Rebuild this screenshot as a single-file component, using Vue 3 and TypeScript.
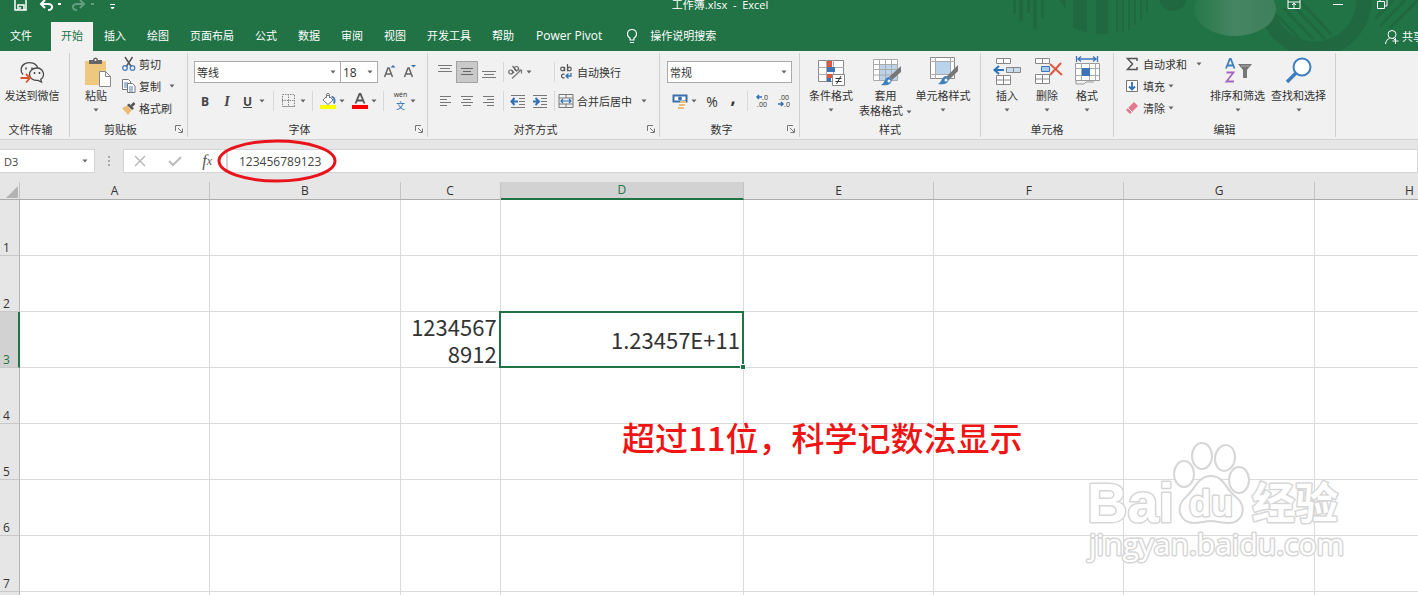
<script setup lang="ts">
import { ref } from 'vue'

const tabs = ['文件', '开始', '插入', '绘图', '页面布局', '公式', '数据', '审阅', '视图', '开发工具', '帮助', 'Power Pivot']
const activeTab = ref('开始')

const fontName = ref('等线')
const fontSize = ref('18')
const numberFormat = ref('常规')
const cellName = ref('D3')
const formula = ref('123456789123')

interface Column {
  name: string
  size: string
}

const columns: Column[] = [
  { name: 'A', size: 'wide' },
  { name: 'B', size: 'wide' },
  { name: 'C', size: 'narrow' },
  { name: 'D', size: 'widest' },
  { name: 'E', size: 'wide' },
  { name: 'F', size: 'wide' },
  { name: 'G', size: 'wide' },
  { name: 'H', size: 'wide' },
]
const rows = [1, 2, 3, 4, 5, 6, 7, 8]
const cells: Record<string, string> = { C3: '12345678912', D3: '1.23457E+11' }
</script>

<template>
  <svg class="sprite" aria-hidden="true">
    <symbol id="arrow" viewBox="0 0 6 4"><path d="M0.5 0.5h5L3 3.5z" fill="#666" /></symbol>
    <symbol id="launch" viewBox="0 0 8 8"><path d="M0.5 6V0.5H6M3 3l4 4M7.500 3.500v4h-4" fill="none" stroke="#777" /></symbol>
    <symbol id="wechat" viewBox="0 0 32 32">
      <g fill="none" stroke="#4a4a4a" stroke-width="1.300">
        <path d="M7 18.500C4 15 4.500 10 9 7.700c5-2.500 11.500-.5 12.700 4.300" />
        <path d="M21 12c-4.500 0-7.500 3-7.500 6.300 0 3.800 4 6.500 8.500 6l3.500 1.700-.7-2.700c5.200-3.500 2.200-11.300-3.800-11.300z" />
      </g>
      <path d="M10 11.500v2M16 11.500v2M18.500 16v2M23.500 16v2" stroke="#444" stroke-width="1.500" />
      <path d="M4.500 22h9M10 18l4 4-4 4.500" fill="none" stroke="#d9532c" stroke-width="1.800" />
    </symbol>
    <symbol id="paste" viewBox="0 0 32 32">
      <path d="M5 5h21v24H5z" fill="#edc87e" />
      <path d="M9 4h4c0-3.500 5-3.500 5 0h4v4H9z" fill="#666" /><circle cx="15.500" cy="4" r="1" fill="#fff" />
      <path d="M19.500 15.500h6l5 5v10h-11z" fill="#fff" stroke="#888" /><path d="M25.500 15.500v5h5" fill="none" stroke="#888" />
    </symbol>
    <symbol id="cut" viewBox="0 0 16 16">
      <path d="M4 1l6.500 10M11.500 1L5 11" stroke="#555" stroke-width="1.500" />
      <circle cx="4" cy="12" r="2.300" fill="none" stroke="#4a7fb8" stroke-width="1.300" /><circle cx="11.500" cy="12" r="2.300" fill="none" stroke="#4a7fb8" stroke-width="1.300" />
    </symbol>
    <symbol id="copy" viewBox="0 0 16 16">
      <path d="M1.500 1.500h6l2 2v8h-8z" fill="#fff" stroke="#777" /><path d="M3 5h4M3 7h4M3 9h3" stroke="#4a7fb8" />
      <path d="M6.500 5.500h5l2.500 2.500v6.500h-7.500z" fill="#fff" stroke="#777" /><path d="M8 9h4M8 11h4M8 13h4" stroke="#4a7fb8" />
    </symbol>
    <symbol id="painter" viewBox="0 0 16 16">
      <path d="M1 8l5-2.500 4.500 5L7 15z" fill="#eebc74" /><path d="M6 5l2-1.500 5 5L11 10z" fill="#555" /><path d="M10.500 6l3-3" stroke="#555" stroke-width="2.500" />
    </symbol>
    <symbol id="borders" viewBox="0 0 16 16">
      <path d="M1.500 1.500h12v12h-12zM7.500 1v13M1 7.500h13" fill="none" stroke="#888" stroke-dasharray="1.500 1" /><path d="M1 13.500h13" stroke="#999" />
    </symbol>
    <symbol id="bucket" viewBox="0 0 16 16">
      <path d="M3 7l5-5 5 5-5 4.500z" fill="#fff" stroke="#777" /><path d="M6.500 5V1.500c0-1.500 3-1.500 3 0V5" fill="none" stroke="#777" />
      <path d="M11.500 3.500c3 1 3.500 4 2.500 7" fill="none" stroke="#3d76b8" stroke-width="1.800" /><path d="M0 12h16v4H0z" fill="#ff0" />
    </symbol>
    <symbol id="fontcolor" viewBox="0 0 16 16">
      <path d="M3.500 10.500L7.500 1h1l4 9.500M5 7.500h6" fill="none" stroke="#555" stroke-width="1.800" /><path d="M0 12h16v4H0z" fill="#f00" />
    </symbol>
    <symbol id="top" viewBox="0 0 16 16"><path d="M1 1.500h14M3 4.500h10M1 7.500h14" stroke="#777" /></symbol>
    <symbol id="mid" viewBox="0 0 16 16"><path d="M2 4.500h12M4 7.500h8M2 10.500h12" stroke="#666" /></symbol>
    <symbol id="bottom" viewBox="0 0 16 16"><path d="M1 7.500h14M3 10.500h10M1 13.500h14" stroke="#777" /></symbol>
    <symbol id="left" viewBox="0 0 16 16"><path d="M3 3.500h11M3 6.500h7M3 9.500h11M3 12.500h7" stroke="#777" /></symbol>
    <symbol id="center" viewBox="0 0 16 16"><path d="M2 3.500h12M4 6.500h8M2 9.500h12M4 12.500h8" stroke="#777" /></symbol>
    <symbol id="right" viewBox="0 0 16 16"><path d="M2 3.500h11M6 6.500h7M2 9.500h11M6 12.500h7" stroke="#777" /></symbol>
    <symbol id="orient" viewBox="0 0 16 16">
      <g fill="none" stroke="#666" stroke-width="1.200"><circle cx="3.700" cy="8" r="2" /><path d="M4.500 6l2.500 3M5.500 2l4.500 5.500" /><circle cx="9.500" cy="4.500" r="2" /><path d="M5 14.500L14 6M11 6h3.500v3.500" stroke="#777" /></g>
    </symbol>
    <symbol id="outdent" viewBox="0 0 16 16"><path d="M1 2.500h14M9 5.500h6M9 8.500h6M9 11.500h6M1 14.500h14" stroke="#777" /><path d="M1 8.500h7M4.500 5L1.500 8.500 4.500 12" fill="none" stroke="#2f6fb3" stroke-width="2" /></symbol>
    <symbol id="indent" viewBox="0 0 16 16"><path d="M1 2.500h14M9 5.500h6M9 8.500h6M9 11.500h6M1 14.500h14" stroke="#777" /><path d="M1 8.500h6M3.500 5L7 8.500 3.500 12" fill="none" stroke="#2f6fb3" stroke-width="2" /></symbol>
    <symbol id="wrap" viewBox="0 0 16 16">
      <g fill="none" stroke="#555" stroke-width="1.200"><circle cx="4.500" cy="5" r="1.800" /><path d="M6.600 3v4.300M9.500 0v7.300" /><circle cx="11.400" cy="5" r="1.800" /><path d="M6.500 10.300c-4-1-4 4.500 0 3.500" /></g>
      <path d="M13 9v3H8.500M10.500 9.500L8 12l2.500 2.500" fill="none" stroke="#2f6fb3" stroke-width="1.300" />
    </symbol>
    <symbol id="merge" viewBox="0 0 16 16">
      <path d="M1 1.500h14v13H1zM1 5h14M1 11h14M8 1v4M8 11v4" fill="none" stroke="#777" /><path d="M3 8h10M5 6L3 8l2 2M11 6l2 2-2 2" fill="none" stroke="#2f6fb3" stroke-width="1.200" />
    </symbol>
    <symbol id="currency" viewBox="0 0 16 16">
      <path d="M1.500 2.500h13v6h-13z" fill="#fff" stroke="#3a70ad" stroke-width="2" /><circle cx="8" cy="5.500" r="2" fill="#3a70ad" />
      <path d="M8 8h6v2H8zM7 11h6v2H7zM6 14h6v2H6z" fill="#edbd75" /><path d="M8 10.500h6M7 13.500h6" stroke="#fff" />
    </symbol>
    <symbol id="cond" viewBox="0 0 32 32">
      <path d="M3.500 4.500h25v21h-25z" fill="#fff" stroke="#888" /><path d="M3 11.500h26M3 18.500h26M11.500 4v21M18.500 4v21" stroke="#aaa" />
      <path d="M12 5h5v6h-5zM12 18h6v4h-6z" fill="#dd5941" /><path d="M12 11h8v5h-8zM12 22h4v4h-4z" fill="#3d76b8" />
      <path d="M17.500 18.500h12v11h-12z" fill="#fff" stroke="#888" /><path d="M20.500 22.500h6M20.500 25.500h6M26 20l-4.500 8" stroke="#333" />
    </symbol>
    <symbol id="tablefmt" viewBox="0 0 32 32">
      <path d="M3.500 3.500h24v21h-24z" fill="#fff" /><path d="M10 9h17v15H10z" fill="#bdd3e9" /><path d="M3.500 3.500h24v21h-24zM3 8.500h25M3 13.500h25M3 19h25M9.500 3v22M15.500 3v22M21.500 3v22" fill="none" stroke="#aaa" />
      <path d="M31 10v6l-9 8-3-3z" fill="#777" /><path d="M19 21c-4 0-4 6-8 8 5 1 10 0 11-5z" fill="#3d7fc0" /><circle cx="19" cy="25" r="1.500" fill="#fff" />
    </symbol>
    <symbol id="cellfmt" viewBox="0 0 32 32">
      <path d="M3.500 1.500h24v21h-24z" fill="#fff" stroke="#888" /><path d="M3 5.500h25M3 18.500h25M8.500 1v22M23.500 1v22" stroke="#aaa" /><path d="M9 6h14v12H9z" fill="#b9d3ea" />
      <path d="M31 9v6l-9 9-3-3z" fill="#777" /><path d="M19 20c-4 0-4 6-8 8 5 1 10 0 11-5z" fill="#3d7fc0" /><circle cx="19" cy="24" r="1.500" fill="#fff" />
    </symbol>
    <symbol id="insert" viewBox="0 0 32 32">
      <path d="M5.500 2.500h14v5h-14zM12.500 2v5M5.500 19.500h14v9h-14zM12.500 19v9M5 24h14" fill="#fff" stroke="#888" /><path d="M15.500 11.500h14v5h-14zM22.500 11v5" fill="#c6dbed" stroke="#888" />
      <path d="M4 14h9M8 10l-4.500 4L8 18" fill="none" stroke="#2f73b7" stroke-width="2" />
    </symbol>
    <symbol id="remove" viewBox="0 0 32 32">
      <path d="M4.500 2.500h14v5h-14zM11.500 2v5M4.500 18.500h14v9h-14zM11.500 18v9M4 23h14" fill="#fff" stroke="#888" /><path d="M10.500 10.500h8v5h-8z" fill="#a9cbe8" stroke="#3d76b8" />
      <path d="M19 8l12 11M30 7L19 19" stroke="#dc5941" stroke-width="2" />
    </symbol>
    <symbol id="format" viewBox="0 0 32 32">
      <path d="M4.500 7.500h24v17h-24z" fill="#fff" stroke="#999" /><path d="M4 12.500h24M4 19.500h24M10.500 7v17M18.500 7v17M24.500 7v17" stroke="#aaa" /><path d="M11 12h8v8h-8z" fill="#3d76b8" />
      <path d="M5.500 0v6M26.500 0v6M7 3h18M10 0.500l-3 2.500 3 2.500M22 0.500l3 2.500-3 2.500" fill="none" stroke="#3d76b8" stroke-width="1.300" /><path d="M5 25v3h8l2-2h8" fill="none" stroke="#999" />
    </symbol>
    <symbol id="sum" viewBox="0 0 16 16"><path d="M13 5V2.500H3.500l5 5.500-5 5.500H13V11" fill="none" stroke="#555" stroke-width="1.500" /></symbol>
    <symbol id="fill" viewBox="0 0 16 16"><path d="M2.500 2.500h11v11h-11z" fill="#fff" stroke="#777" /><path d="M8 4v7M5 8.500l3 3 3-3" fill="none" stroke="#2f6fb3" stroke-width="1.800" /></symbol>
    <symbol id="eraser" viewBox="0 0 16 16"><path d="M2 10l8-8 4 4-8 8z" fill="#e5788b" /><path d="M4 8l4 4" stroke="#fff" /></symbol>
    <symbol id="sort" viewBox="0 0 32 32">
      <path d="M4 12.500L7.800 3h1l3.700 9.500M5.500 9.500h5.500" fill="none" stroke="#3d7fc0" stroke-width="1.800" /><path d="M4.500 16.500h7l-7 9h7.500" fill="none" stroke="#a566c0" stroke-width="1.800" />
      <path d="M16 8h14l-5 6v8h-4v-8z" fill="#777" /><path d="M19 10h8" stroke="#aaa" />
    </symbol>
    <symbol id="find" viewBox="0 0 32 32"><circle cx="19" cy="11" r="8.500" fill="#fff" stroke="#3d7fc0" stroke-width="2" /><path d="M13 17L4 26" stroke="#3d7fc0" stroke-width="3.500" /></symbol>
    <symbol id="growfont" viewBox="0 0 16 16"><path d="M2.500 13L6 4h1l3.500 9M4 10h5" fill="none" stroke="#666" stroke-width="1.500" /><path d="M8.500 3.500L11 1l2.500 2.500z" fill="#2f6fb3" /></symbol>
    <symbol id="shrinkfont" viewBox="0 0 16 16"><path d="M2.500 13L6 4h1l3.500 9M4 10h5" fill="none" stroke="#666" stroke-width="1.500" /><path d="M9 1h5l-2.500 2.500z" fill="#2f6fb3" /></symbol>
    <symbol id="decarrow" viewBox="0 0 6 6"><path d="M6 3H1M3 1L1 3l2 2" fill="none" stroke="#2f6fb3" stroke-width="1.500" /></symbol>
    <symbol id="incarrow" viewBox="0 0 6 6"><path d="M0 3h5M3 1l2 2-2 2" fill="none" stroke="#2f6fb3" stroke-width="1.500" /></symbol>
  </svg>

  <div class="excel">
    <header class="head">
      <svg class="decor" viewBox="0 0 438 51" aria-hidden="true">
        <defs>
          <linearGradient id="glow" x1="0" x2="1" y1="0" y2="0"><stop offset="0" stop-color="#257849" /><stop offset="0.5" stop-color="#468562" /><stop offset="1" stop-color="#3f7f5c" /></linearGradient>
        </defs>
        <g fill="#206840">
          <path d="M33 0h3v14h-3zM39 0h4v21h-4zM47 0h3v13h-3zM53 0h4v29h-4zM61 0h3v18h-3zM79 0h7v9zM93 0h14v33l-14-5zM116 0h12v34h-12zM136 0h2v33h-2zM142 0h2v33h-2zM148 0h2v30h-2zM154 0h2v25h-2zM160 0h2v20h-2zM166 0h2v12h-2z" />
          <circle cx="193" cy="-3" r="14" />
        </g>
        <circle cx="335" cy="0" r="49" fill="none" stroke="#206840" stroke-width="15" />
        <path d="M296 14l23 24M304 8l29 31M308 0l37 39M319 0l32 34M395 19l18-19M400 26l25-26M410 28l28-28" stroke="#206840" stroke-width="3" />
        <ellipse cx="255" cy="9" rx="41" ry="27" fill="url(#glow)" />
      </svg>
      <div class="titlebar">
        <div class="quick">
          <button aria-label="保存"><svg class="i16" viewBox="0 0 16 16"><path d="M3 2v12h11V2M6 14V9h6v5M8 13v-2" fill="none" stroke="#fff" stroke-width="1.500" /></svg></button>
          <button aria-label="撤消" class="undo"><svg class="i16" viewBox="0 0 16 16"><path d="M7 4L3 8l4 4M3 8h7c6 0 5 6 0 6" fill="none" stroke="#fff" stroke-width="2" /></svg><i class="dot" /></button>
          <button aria-label="恢复" class="redo"><svg class="i16" viewBox="0 0 16 16"><path d="M9 4l4 4-4 4M13 8H6c-6 0-5 6 0 6" fill="none" stroke="#fff" stroke-width="2" /></svg><i class="dot" /></button>
          <button aria-label="自定义快速访问工具栏"><svg class="i16" viewBox="0 0 16 16"><path d="M6 8.500h5M7 11.500h3l-1.500 1.500z" fill="#fff" stroke="#fff" /></svg></button>
        </div>
        <h1>工作簿.xlsx&nbsp; -&nbsp; Excel</h1>
        <div class="window">
          <button aria-label="功能区显示选项"><svg class="i16" viewBox="0 0 16 16"><path d="M2 3.500h12v9H2zM2 6h12M8 12V7M6 9l2-2 2 2" fill="none" stroke="#fff" /></svg></button>
          <button aria-label="最小化"><svg class="i16" viewBox="0 0 16 16"><path d="M3 8.500h10" stroke="#fff" /></svg></button>
          <button aria-label="还原"><svg class="i16" viewBox="0 0 16 16"><path d="M3.500 5.500h7v7h-7zM6 5V3h7v7h-2" fill="none" stroke="#fff" /></svg></button>
        </div>
      </div>
      <nav class="tabs">
        <button v-for="tab in tabs" :key="tab" :class="{ active: tab === activeTab }" @click="activeTab = tab">{{ tab }}</button>
        <button class="tell"><svg class="i16" viewBox="0 0 16 16"><path d="M6 12v-2C2 7.500 3 1.500 8 1.500s6 6 2 8.500v2zM6 14.500h4" fill="none" stroke="#fff" stroke-width="1.200" /></svg>操作说明搜索</button>
        <button class="share"><svg class="i16" viewBox="0 0 16 16"><circle cx="8" cy="5.500" r="4" fill="none" stroke="#fff" /><path d="M1.500 15c.5-3.500 2-5 4-5.500M9 9l2 2M11.500 9v6M8.500 12h6" fill="none" stroke="#fff" /></svg>共享</button>
      </nav>
    </header>

    <main class="ribbon">
      <section class="group">
        <div class="body transfer">
          <button class="big"><svg class="i32"><use href="#wechat" /></svg>发送到微信</button>
        </div>
        <div class="caption"><span>文件传输</span><i class="gap8" /></div>
      </section>

      <section class="group">
        <div class="body clip">
          <button class="big"><svg class="i32"><use href="#paste" /></svg>粘贴<svg class="arrow"><use href="#arrow" /></svg></button>
          <div class="stack">
            <button class="small"><svg class="i16"><use href="#cut" /></svg>剪切</button>
            <button class="small spaced"><svg class="i16"><use href="#copy" /></svg>复制<svg class="arrow"><use href="#arrow" /></svg></button>
            <button class="small"><svg class="i16"><use href="#painter" /></svg>格式刷</button>
          </div>
        </div>
        <div class="caption"><span>剪贴板</span><button aria-label="剪贴板设置"><svg class="launch"><use href="#launch" /></svg></button></div>
      </section>

      <section class="group">
        <div class="body bars">
          <div class="bar">
            <label class="combo font"><select v-model="fontName" aria-label="字体"><option>等线</option></select><svg class="arrow"><use href="#arrow" /></svg></label>
            <label class="combo size"><select v-model="fontSize" aria-label="字号"><option>18</option></select><svg class="arrow"><use href="#arrow" /></svg></label>
            <button class="w20" aria-label="增大字号"><svg class="i16"><use href="#growfont" /></svg></button>
            <button class="w20" aria-label="减小字号"><svg class="i16"><use href="#shrinkfont" /></svg></button>
          </div>
          <div class="bar">
            <button class="w22 glyph"><b>B</b></button>
            <button class="w22 glyph"><b class="it">I</b></button>
            <button class="w32 glyph"><b class="un">U</b><svg class="arrow"><use href="#arrow" /></svg></button>
            <i class="rule" />
            <button class="w32" aria-label="边框"><svg class="i16"><use href="#borders" /></svg><svg class="arrow"><use href="#arrow" /></svg></button>
            <i class="rule" />
            <button class="w32" aria-label="填充颜色"><svg class="i16"><use href="#bucket" /></svg><svg class="arrow"><use href="#arrow" /></svg></button>
            <button class="w32" aria-label="字体颜色"><svg class="i16"><use href="#fontcolor" /></svg><svg class="arrow"><use href="#arrow" /></svg></button>
            <i class="rule" />
            <button class="w36" aria-label="拼音"><span class="pinyin"><span>wén</span><span class="wen">文</span></span><svg class="arrow"><use href="#arrow" /></svg></button>
          </div>
        </div>
        <div class="caption"><span>字体</span><button aria-label="字体设置"><svg class="launch"><use href="#launch" /></svg></button></div>
      </section>

      <section class="group">
        <div class="body bars">
          <div class="bar">
            <button class="w22" aria-label="顶端对齐"><svg class="i16"><use href="#top" /></svg></button>
            <button class="w22 pressed" aria-label="垂直居中"><svg class="i16"><use href="#mid" /></svg></button>
            <button class="w22" aria-label="底端对齐"><svg class="i16"><use href="#bottom" /></svg></button>
            <i class="rule" />
            <button class="w44 start" aria-label="方向"><svg class="i16"><use href="#orient" /></svg><svg class="arrow"><use href="#arrow" /></svg></button>
            <i class="rule" />
            <button class="small"><svg class="i16"><use href="#wrap" /></svg>自动换行</button>
          </div>
          <div class="bar">
            <button class="w22" aria-label="左对齐"><svg class="i16"><use href="#left" /></svg></button>
            <button class="w22" aria-label="居中"><svg class="i16"><use href="#center" /></svg></button>
            <button class="w22" aria-label="右对齐"><svg class="i16"><use href="#right" /></svg></button>
            <i class="rule" />
            <button class="w22" aria-label="减少缩进量"><svg class="i16"><use href="#outdent" /></svg></button>
            <button class="w22" aria-label="增加缩进量"><svg class="i16"><use href="#indent" /></svg></button>
            <i class="rule" />
            <button class="small spaced"><svg class="i16"><use href="#merge" /></svg>合并后居中<svg class="arrow"><use href="#arrow" /></svg></button>
          </div>
        </div>
        <div class="caption"><span>对齐方式</span><button aria-label="对齐设置"><svg class="launch"><use href="#launch" /></svg></button></div>
      </section>

      <section class="group">
        <div class="body bars">
          <div class="bar">
            <label class="combo number"><select v-model="numberFormat" aria-label="数字格式"><option>常规</option></select><svg class="arrow"><use href="#arrow" /></svg></label>
          </div>
          <div class="bar">
            <button class="w36" aria-label="会计数字格式"><svg class="i16"><use href="#currency" /></svg><svg class="arrow"><use href="#arrow" /></svg></button>
            <button class="w20 percent">%</button>
            <button class="w22 comma">,</button>
            <i class="rule" />
            <button class="w22 decimals" aria-label="增加小数位数"><span><svg><use href="#decarrow" /></svg>.0</span><span>.00</span></button>
            <button class="w22 decimals" aria-label="减少小数位数"><span>.00</span><span><svg><use href="#incarrow" /></svg>.0</span></button>
          </div>
        </div>
        <div class="caption"><span>数字</span><button aria-label="数字设置"><svg class="launch"><use href="#launch" /></svg></button></div>
      </section>

      <section class="group">
        <div class="body styles">
          <button class="big"><svg class="i32"><use href="#cond" /></svg>条件格式<svg class="arrow"><use href="#arrow" /></svg></button>
          <button class="big twoline"><svg class="i32"><use href="#tablefmt" /></svg>套用<span>表格格式<svg class="arrow inline"><use href="#arrow" /></svg></span></button>
          <button class="big"><svg class="i32"><use href="#cellfmt" /></svg>单元格样式<svg class="arrow"><use href="#arrow" /></svg></button>
        </div>
        <div class="caption"><span>样式</span></div>
      </section>

      <section class="group">
        <div class="body cellops">
          <button class="big"><svg class="i32"><use href="#insert" /></svg>插入<svg class="arrow"><use href="#arrow" /></svg></button>
          <button class="big"><svg class="i32"><use href="#remove" /></svg>删除<svg class="arrow"><use href="#arrow" /></svg></button>
          <button class="big"><svg class="i32"><use href="#format" /></svg>格式<svg class="arrow"><use href="#arrow" /></svg></button>
        </div>
        <div class="caption"><span>单元格</span></div>
      </section>

      <section class="group">
        <div class="body editing">
          <div class="stack">
            <button class="small spaced"><svg class="i16"><use href="#sum" /></svg>自动求和<svg class="arrow"><use href="#arrow" /></svg></button>
            <button class="small"><svg class="i16"><use href="#fill" /></svg>填充<svg class="arrow"><use href="#arrow" /></svg></button>
            <button class="small"><svg class="i16"><use href="#eraser" /></svg>清除<svg class="arrow"><use href="#arrow" /></svg></button>
          </div>
          <button class="big"><svg class="i32"><use href="#sort" /></svg>排序和筛选<svg class="arrow"><use href="#arrow" /></svg></button>
          <button class="big"><svg class="i32"><use href="#find" /></svg>查找和选择<svg class="arrow"><use href="#arrow" /></svg></button>
        </div>
        <div class="caption"><span>编辑</span></div>
      </section>
    </main>

    <div class="formula">
      <div class="namebox">
        <input v-model="cellName" aria-label="名称框" />
        <button aria-label="名称列表"><svg class="arrow"><use href="#arrow" /></svg></button>
      </div>
      <svg class="grip" viewBox="0 0 4 12" aria-hidden="true"><path d="M1 1h2v2H1zM1 5h2v2H1zM1 9h2v2H1z" fill="#aaa" /></svg>
      <div class="actions">
        <button aria-label="取消"><svg class="i16" viewBox="0 0 16 16"><path d="M3 3l10 10M13 3L3 13" stroke="#bbb" stroke-width="1.500" /></svg></button>
        <button aria-label="输入"><svg class="i16" viewBox="0 0 16 16"><path d="M2 8l4 4 8-8" fill="none" stroke="#bbb" stroke-width="2" /></svg></button>
        <button class="fx">f<sub>x</sub></button>
      </div>
      <input v-model="formula" class="entry" aria-label="编辑栏" />
      <svg class="ring" viewBox="0 0 122 46" aria-hidden="true"><ellipse cx="61" cy="23" rx="58" ry="20" fill="none" stroke="#e8131b" stroke-width="3" /></svg>
    </div>

    <div class="sheet">
      <table>
        <colgroup>
          <col class="index" />
          <col v-for="col in columns" :key="col.name" :class="col.size" />
        </colgroup>
        <thead>
          <tr>
            <th class="corner"><svg viewBox="0 0 12 12" aria-hidden="true"><path d="M12 0v12H0z" fill="#b3b3b3" /></svg></th>
            <th v-for="col in columns" :key="col.name" :class="{ current: col.name === 'D' }">{{ col.name }}</th>
          </tr>
        </thead>
        <tbody>
          <tr v-for="row in rows" :key="row">
            <th :class="{ current: row === 3 }">{{ row }}</th>
            <td v-for="col in columns" :key="col.name" :class="{ selected: col.name + row === cellName }">{{ cells[col.name + row] }}</td>
          </tr>
        </tbody>
      </table>
      <p class="note">超过11位，科学记数法显示</p>
      <svg class="watermark" viewBox="0 0 270 130" aria-label="Baidu 经验">
        <g fill="#fff" stroke="#d6d6d6" stroke-width="2" stroke-linejoin="round">
          <ellipse cx="102" cy="44" rx="10" ry="13" /><ellipse cx="120" cy="26" rx="10" ry="13" />
          <ellipse cx="143" cy="28" rx="10" ry="13" transform="rotate(8 143 28)" /><ellipse cx="157" cy="50" rx="10" ry="13" />
          <path d="M129 46c13 0 15 14 25 21 12 9 7 27-8 26-7 0-11-2-17-2s-11 2-17 2c-15 0-19-17-8-26 9-8 12-21 25-21z" />
          <g class="words">
            <text class="wm bai" x="5" y="92">Bai</text>
            <text class="wm du" x="107" y="86">du</text>
            <text class="wm jing" x="170" y="89">经验</text>
            <text class="wm url" x="7" y="125">jingyan.baidu.com</text>
          </g>
        </g>
      </svg>
    </div>
  </div>
</template>

<style>
body {
  margin: 0;
  overflow: hidden;
}
</style>

<style scoped>
.sprite {
  position: absolute;
  width: 0;
  height: 0;
}
.excel {
  display: flex;
  flex-direction: column;
  height: 100vh;
  overflow: hidden;
  background: #fff;
  color: #333;
  font: 11px/15px "Open Sans", "Noto Sans CJK SC", sans-serif;
}
button {
  display: inline-flex;
  align-items: center;
  justify-content: center;
  margin: 0;
  padding: 0;
  border: 0;
  background: none;
  color: inherit;
  font: inherit;
  white-space: nowrap;
}
svg {
  flex: none;
}
.i16 {
  width: 16px;
  height: 16px;
}
.i32 {
  width: 32px;
  height: 32px;
}
.arrow {
  width: 6px;
  height: 4px;
}

.head {
  position: relative;
  background: #217346;
  color: #fff;
  overflow: hidden;
}
.decor {
  position: absolute;
  top: 0;
  right: 0;
  width: 438px;
  height: 51px;
}
.titlebar {
  position: relative;
  display: grid;
  grid-template-columns: 1fr auto 1fr;
  align-items: start;
  height: 22px;
}
.titlebar h1 {
  margin: 0;
  padding-left: 22px;
  font-size: 11px;
  font-weight: 400;
  line-height: 9px;
}
.quick {
  display: flex;
  gap: 10px;
  padding-left: 12px;
  height: 12px;
  align-items: flex-end;
}
.undo,
.redo {
  gap: 4px;
}
.redo {
  opacity: 0.3;
}
.dot {
  width: 3px;
  height: 2px;
  background: #fff;
}
.window {
  display: flex;
  justify-content: flex-end;
  gap: 28px;
  padding-right: 28px;
  height: 12px;
  align-items: flex-end;
}
.tabs {
  position: relative;
  display: flex;
  height: 29px;
}
.tabs button {
  padding: 0 10px 2px 11px;
}
.tabs button:first-child {
  padding: 0 19px 2px 10px;
}
.tabs button:nth-child(12) {
  padding-left: 12px;
  font-size: 12px;
}
.tabs .active {
  padding: 0 10px 2px;
  background: #f1f1f1;
  color: #217346;
}
.tabs .tell {
  gap: 10px;
  padding-left: 12px;
}
.tabs .share {
  gap: 2px;
  margin-left: auto;
  margin-right: -12px;
  padding: 0 6px 0 0;
}

.ribbon {
  display: grid;
  grid-template-columns: 70px 118px 240px 232px 140px 181px 133px 222px;
  padding: 2px 0;
  background: #f1f1f1;
  border-bottom: 1px solid #d2d2d2;
}
.group {
  display: flex;
  flex-direction: column;
  border-right: 1px solid #d0d0d0;
}
.body {
  display: flex;
  box-sizing: border-box;
  height: 68px;
}
.caption {
  display: flex;
  align-items: center;
  height: 16px;
}
.caption span {
  flex: 1;
  text-align: center;
}
.caption button {
  width: 16px;
}
.gap8 {
  width: 8px;
}
.launch {
  width: 8px;
  height: 8px;
}
.big {
  flex-direction: column;
  justify-content: flex-start;
  padding-top: 3px;
  width: 56px;
}
.big > .arrow {
  margin-top: 5px;
}
.inline {
  margin-left: 3px;
  vertical-align: 1px;
}
.stack {
  display: flex;
  flex-direction: column;
  align-items: flex-start;
}
.small {
  gap: 3px;
  height: 22px;
}
.spaced .arrow {
  margin-left: 6px;
}
.transfer {
  padding-left: 4px;
}
.clip {
  padding-left: 1px;
}
.clip .big {
  width: 50px;
}
.clip .small {
  gap: 2px;
}
.bars {
  flex-direction: column;
  gap: 7px;
  padding: 8px 0 0 6px;
}
.bar {
  display: flex;
  align-items: center;
  height: 22px;
}
.bar button {
  flex: none;
  gap: 3px;
  height: 22px;
}
.w20 {
  width: 20px;
}
.w22 {
  width: 22px;
}
.w32 {
  width: 32px;
}
.w36 {
  width: 36px;
}
.w44 {
  width: 44px;
}
.bar .start {
  justify-content: flex-start;
  box-sizing: border-box;
}
.pressed {
  background: #c9c9c9;
  box-shadow: inset 0 0 0 1px #a3a3a3;
}
.rule {
  width: 1px;
  height: 20px;
  margin: 0 3px;
  background: #d8d8d8;
}
.glyph {
  font-size: 12px;
  color: #444;
}
.bar .glyph {
  gap: 7px;
}
.it {
  font-family: "Liberation Serif", serif;
  font-size: 14px;
  font-style: italic;
}
.un {
  text-decoration: underline;
}
.pinyin {
  display: flex;
  flex-direction: column;
  align-items: center;
  font-size: 7px;
  line-height: 10px;
}
.wen {
  color: #2f6fb3;
  font-size: 9px;
  line-height: 12px;
}
.combo {
  position: relative;
  display: flex;
  height: 22px;
  box-sizing: border-box;
  border: 1px solid #ababab;
  background: #fff;
}
.combo select {
  width: 100%;
  padding: 0 2px;
  border: 0;
  appearance: none;
  background: none;
  color: #333;
  font: inherit;
}
.combo .arrow {
  position: absolute;
  top: 8px;
  right: 4px;
}
.font {
  width: 147px;
}
.size {
  width: 38px;
  margin: 0 2px 0 -1px;
}
.size select {
  font-size: 12px;
}
.number {
  width: 125px;
  margin-left: 1px;
}
.percent {
  font-size: 14px;
}
.bar .comma {
  box-sizing: border-box;
  padding-bottom: 8px;
  font-size: 18px;
  font-weight: 700;
}
.bar .decimals {
  flex-direction: column;
  gap: 0;
  align-items: center;
  font-size: 7px;
  line-height: 7px;
}
.decimals svg {
  width: 6px;
  height: 6px;
}
.styles {
  padding-left: 3px;
}
.styles .twoline {
  width: 53px;
}
.styles .big:last-child {
  width: 62px;
}
.cellops {
  padding-left: 6px;
}
.cellops .big {
  width: 40px;
}
.editing {
  padding-left: 10px;
}
.editing .stack {
  width: 83px;
}
.editing .big {
  width: 61px;
}

.formula {
  position: relative;
  display: flex;
  align-items: center;
  height: 24px;
  padding: 9px 0 9px;
  background: #e6e6e6;
}
.namebox,
.actions,
.entry {
  display: flex;
  height: 24px;
  box-sizing: border-box;
  border: 1px solid #d4d4d4;
  background: #fff;
}
.namebox {
  width: 95px;
  border-left: 0;
}
.namebox input {
  flex: 1;
  min-width: 0;
  padding: 0 4px;
  border: 0;
  background: none;
  color: #444;
  font: inherit;
}
.namebox button {
  width: 18px;
}
.grip {
  width: 4px;
  height: 12px;
  margin: 0 12px;
}
.actions {
  width: 104px;
  padding: 0 14px 0 8px;
  justify-content: space-between;
}
.fx {
  font: italic 16px/20px "Liberation Serif", serif;
  color: #555;
}
.fx sub {
  font-size: 12px;
}
.entry {
  flex: 1;
  min-width: 0;
  padding: 0 11px;
  color: #444;
  font: inherit;
  font-size: 12px;
}
.ring {
  position: absolute;
  left: 216px;
  top: -2px;
  width: 122px;
  height: 46px;
  z-index: 1;
}

.sheet {
  position: relative;
  flex: 1;
  min-height: 0;
  overflow: hidden;
}
table {
  table-layout: fixed;
  width: 1505px;
  border-collapse: separate;
  border-spacing: 0;
}
.index {
  width: 20px;
}
.wide {
  width: 190px;
}
.narrow {
  width: 100px;
}
.widest {
  width: 243px;
}
th,
td {
  box-sizing: border-box;
  padding: 0;
  border-right: 1px solid #dadada;
  border-bottom: 1px solid #dadada;
}
thead th {
  height: 18px;
  background: #e6e6e6;
  border-color: #c4c4c4;
  border-bottom-color: #ababab;
  font-size: 12px;
  font-weight: 400;
  line-height: 16px;
}
thead .current {
  background: #d2d2d2;
  border-bottom: 2px solid #217346;
  color: #217346;
}
.corner svg {
  display: block;
  width: 12px;
  height: 12px;
  margin: 3px 0 0 6px;
}
tbody th {
  height: 56px;
  padding-left: 3px;
  background: #e6e6e6;
  border-right-color: #b5b5b5;
  border-bottom-color: #c8c8c8;
  font-size: 12px;
  font-weight: 400;
  line-height: 15px;
  text-align: left;
  vertical-align: bottom;
}
tbody .current {
  background: #d2d2d2;
  border-right: 2px solid #217346;
  color: #217346;
}
td {
  padding: 0 3px;
  font: 22px/27px "Noto Sans CJK SC", sans-serif;
  text-align: right;
  vertical-align: middle;
  word-break: break-all;
}
.selected {
  position: relative;
}
.selected::before {
  content: "";
  position: absolute;
  inset: -1px -1px -1px -2px;
  border: 2px solid #217346;
}
.selected::after {
  content: "";
  position: absolute;
  right: -3px;
  bottom: -3px;
  width: 4px;
  height: 4px;
  border: 1px solid #fff;
  background: #217346;
}
.note {
  position: absolute;
  left: 622px;
  top: 235px;
  margin: 0;
  color: #f01414;
  font: 500 33px/40px "Noto Sans CJK SC", sans-serif;
  white-space: nowrap;
}
.watermark {
  position: absolute;
  right: 66px;
  bottom: 35px;
  width: 270px;
  height: 130px;
  overflow: visible;
}
.words {
  paint-order: stroke;
  stroke-width: 3px;
}
.wm {
  font-family: "Liberation Sans", "Noto Sans CJK SC", sans-serif;
  font-weight: 700;
}
.bai {
  font-size: 56px;
}
.du {
  font-size: 36px;
}
.jing {
  font-size: 43px;
}
.url {
  font-family: "Open Sans", sans-serif;
  font-size: 30px;
  font-weight: 400;
}
</style>
